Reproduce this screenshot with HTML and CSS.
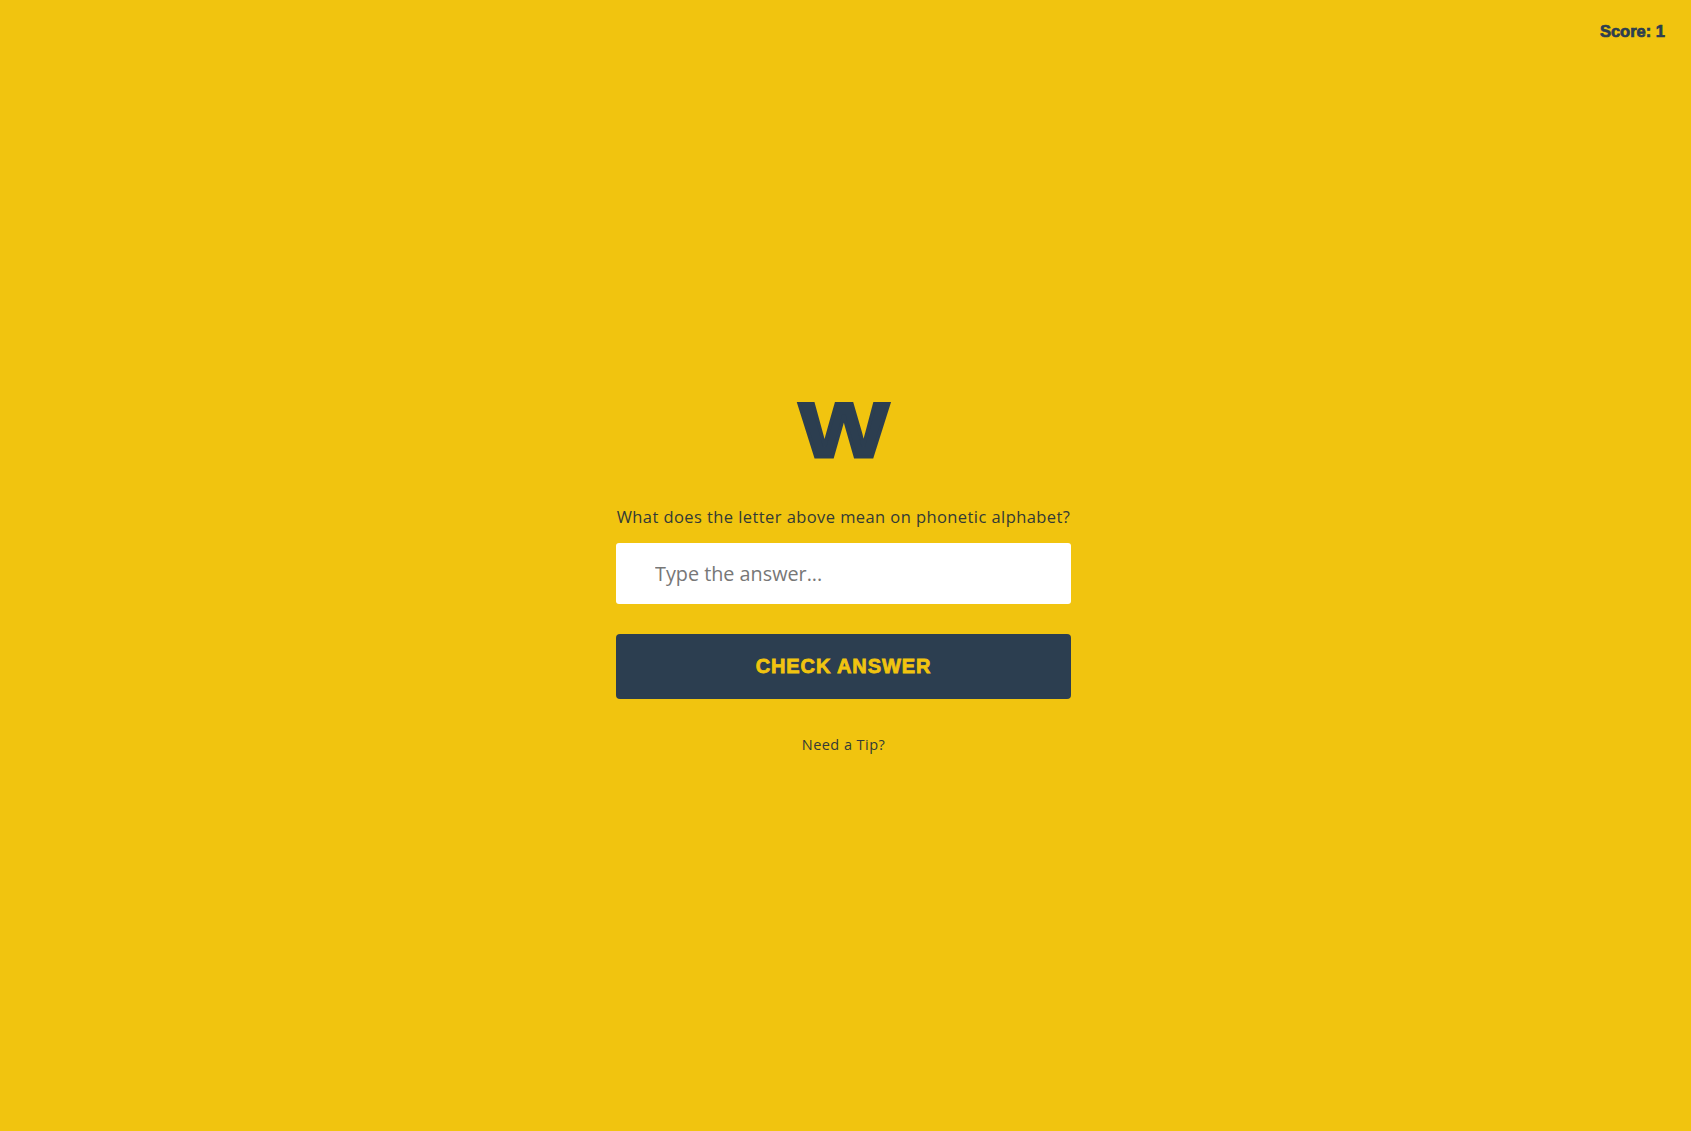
FILE: index.html
```html
<!DOCTYPE html>
<html lang="en">
<head>
<meta charset="utf-8">
<title>Phonetic Alphabet Quiz</title>
<link rel="stylesheet" href="styles.css">
</head>
<body>
<div class="score">Score: 1</div>
<main class="quiz">
  <div class="letter"><span>W</span></div>
  <p class="question">What does the letter above mean on phonetic alphabet?</p>
  <input class="answer" type="text" placeholder="Type the answer...">
  <button class="check" type="button">CHECK ANSWER</button>
  <a class="tip" href="#">Need a Tip?</a>
</main>
</body>
</html>
```
FILE: styles.css
```css
html, body {
  margin: 0;
  padding: 0;
}
body {
  background: #f1c40f;
  min-height: 100vh;
  font-family: "Open Sans", "Liberation Sans", sans-serif;
  color: #2c3e50;
  display: flex;
  flex-direction: column;
  align-items: center;
  justify-content: center;
  box-sizing: border-box;
  padding-top: 14px;
  padding-right: 4px;
}
.score {
  position: absolute;
  top: 22px;
  right: 26px;
  font-family: "Liberation Sans", Arial, sans-serif;
  font-weight: 900;
  font-size: 16.5px;
  -webkit-text-stroke: 0.7px #2c3e50;
  color: #2c3e50;
}
.quiz {
  width: 455px;
  display: flex;
  flex-direction: column;
  align-items: center;
}
.letter {
  font-family: "Liberation Sans", Arial, sans-serif;
  font-weight: 700;
  font-size: 78px;
  line-height: 80px;
  height: 78px;
  color: #2c3e50;
  -webkit-text-stroke: 3px #2c3e50;
}
.letter span {
  display: inline-block;
  transform: scaleX(1.22);
}
.question {
  margin: 38px 0 0;
  font-size: 16.5px;
  line-height: 22px;
  letter-spacing: 0.42px;
  color: #333a36;
  white-space: nowrap;
}
.answer {
  margin-top: 15px;
  width: 100%;
  height: 61px;
  box-sizing: border-box;
  border: none;
  border-radius: 3px;
  background: #fff;
  padding: 0 0 0 39px;
  font-family: "Open Sans", sans-serif;
  font-size: 19.8px;
  color: #333;
  outline: none;
}
.answer::placeholder {
  color: #777;
}
.check {
  margin-top: 30px;
  width: 100%;
  height: 65px;
  border: none;
  border-radius: 4px;
  background: #2c3e50;
  color: #f1c40f;
  font-family: "Liberation Sans", Arial, sans-serif;
  font-weight: 700;
  font-size: 20px;
  letter-spacing: 0.9px;
  -webkit-text-stroke: 0.8px #f1c40f;
  cursor: pointer;
}
.tip {
  margin-top: 36px;
  font-size: 14.5px;
  line-height: 20px;
  letter-spacing: 0.45px;
  color: #333a36;
  text-decoration: none;
}
```
